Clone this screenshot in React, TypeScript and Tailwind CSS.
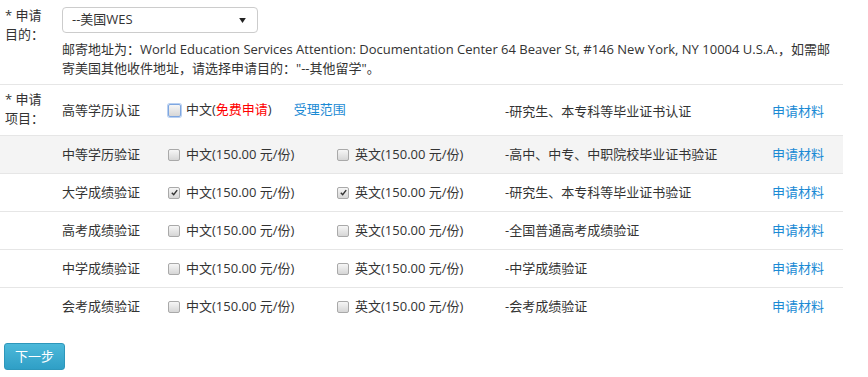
import React from 'react';

interface ItemRow {
  name: string;
  cn: boolean;
  en: boolean;
  desc: string;
  shaded?: boolean;
}

const rows: ItemRow[] = [
  { name: '中等学历验证', cn: false, en: false, desc: '-高中、中专、中职院校毕业证书验证', shaded: true },
  { name: '大学成绩验证', cn: true, en: true, desc: '-研究生、本专科等毕业证书验证' },
  { name: '高考成绩验证', cn: false, en: false, desc: '-全国普通高考成绩验证' },
  { name: '中学成绩验证', cn: false, en: false, desc: '-中学成绩验证' },
  { name: '会考成绩验证', cn: false, en: false, desc: '-会考成绩验证' },
];

const Check: React.FC<{ checked?: boolean; focus?: boolean }> = ({ checked, focus }) => (
  <span
    className={`inline-flex shrink-0 items-center justify-center rounded-[2px] border bg-gradient-to-b from-[#f6f6f6] to-[#d6d6d6] ${
      focus ? 'h-[13px] w-[13px] border-[#7ea6e0] shadow-[0_0_0_1px_#b8d0f2]' : 'h-[12px] w-[12px] border-[#a9a9a9]'
    }`}
  >
    {checked && (
      <svg viewBox="0 0 10 10" className="h-[9px] w-[9px]">
        <path d="M2 5.2 L4.1 7.4 L8 2.4" fill="none" stroke="#333" strokeWidth="1.6" />
      </svg>
    )}
  </span>
);

export default function App() {
  return (
    <div
      className="w-[868px] h-[377px] bg-white text-[13px] text-[#333] overflow-hidden"
      style={{ fontFamily: '"Open Sans", "Noto Sans CJK SC", sans-serif' }}
    >
      <div className="w-[843px]">
        {/* purpose */}
        <div className="flex pb-[6px]">
          <div className="w-[62px] shrink-0 pl-[5px] pt-[6px] leading-[19px]">
            * 申请
            <br />
            目的：
          </div>
          <div className="flex-1 pt-[7px]">
            <div className="flex h-[26px] w-[196px] items-center justify-between rounded-[4px] border border-[#ccc] pl-[9px] pr-[11px]">
              <span>--美国WES</span>
              <svg viewBox="0 0 8 6" className="h-[5px] w-[7px]">
                <path d="M0 0 H8 L4 6 Z" fill="#222" />
              </svg>
            </div>
            <p className="mt-[7px] pr-[10px] text-[13px] leading-[19px]">
              邮寄地址为：World Education Services Attention: Documentation Center 64 Beaver St, #146 New York, NY 10004 U.S.A.，如需邮寄美国其他收件地址，请选择申请目的："--其他留学"。
            </p>
          </div>
        </div>

        {/* first item row */}
        <div className="flex h-[51px] border-t border-[#e6e6e6]">
          <div className="w-[62px] shrink-0 pl-[5px] pt-[5px] leading-[19px]">
            * 申请
            <br />
            项目：
          </div>
          <div className="w-[106px] shrink-0 pt-[16px]">高等学历认证</div>
          <div className="flex w-[337px] shrink-0 items-start gap-[5px] pt-[15px]">
            <span className="mt-[3px]">
              <Check focus />
            </span>
            <span>
              中文(<span className="text-[#f00]">免费申请</span>)
            </span>
            <span className="ml-[17px] text-[#1a8ad4]">受理范围</span>
          </div>
          <div className="w-[267px] shrink-0 pt-[17px]">-研究生、本专科等毕业证书认证</div>
          <div className="flex-1 pt-[17px] text-[#1a8ad4]">申请材料</div>
        </div>

        {rows.map((r) => (
          <div
            key={r.name}
            className={`flex h-[38px] items-center border-t border-[#e6e6e6] ${r.shaded ? 'bg-[#f4f4f4]' : ''}`}
          >
            <div className="w-[62px] shrink-0" />
            <div className="w-[106px] shrink-0">{r.name}</div>
            <div className="flex w-[169px] shrink-0 items-center gap-[6px]">
              <Check checked={r.cn} />
              <span>中文(150.00 元/份)</span>
            </div>
            <div className="flex w-[168px] shrink-0 items-center gap-[6px]">
              <Check checked={r.en} />
              <span>英文(150.00 元/份)</span>
            </div>
            <div className="w-[267px] shrink-0">{r.desc}</div>
            <div className="flex-1 text-[#1a8ad4]">申请材料</div>
          </div>
        ))}

        <div className="pl-[4px] pt-[18px]">
          <button
            type="button"
            className="h-[27px] w-[61px] rounded-[3px] border border-[#2d97bb] bg-gradient-to-b from-[#4cb9da] to-[#2f9fc6] text-[13px] text-white"
          >
            下一步
          </button>
        </div>
      </div>
    </div>
  );
}
